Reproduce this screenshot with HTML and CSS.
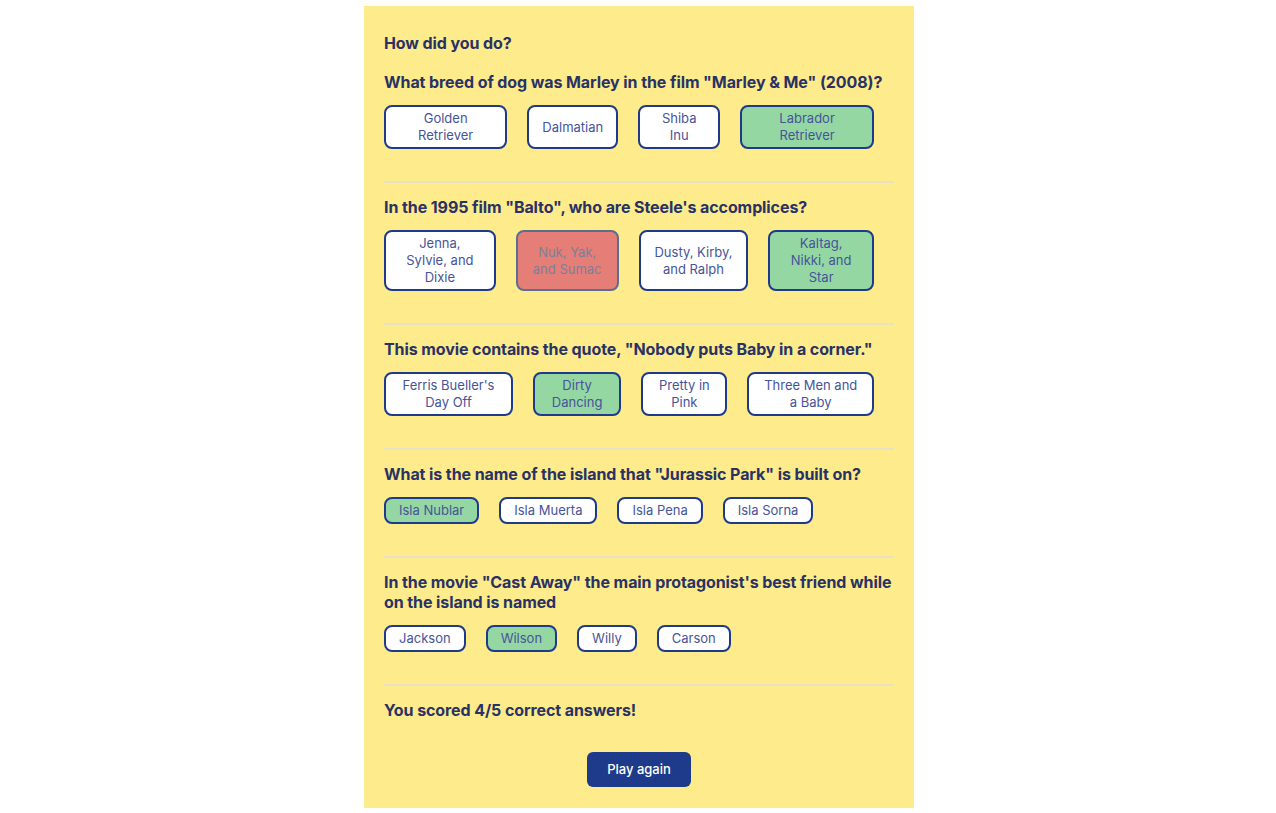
FILE: index.html
```html
<!DOCTYPE html>
<html lang="en">
<head>
<meta charset="utf-8">
<title>Quiz results</title>
<link rel="stylesheet" href="styles.css">
</head>
<body>
<main class="quiz">
  <h1 class="title">How did you do?</h1>

  <section class="question">
    <h2 class="question-text">What breed of dog was Marley in the film "Marley &amp; Me" (2008)?</h2>
    <div class="answers">
      <button class="answer">Golden Retriever</button>
      <button class="answer">Dalmatian</button>
      <button class="answer">Shiba Inu</button>
      <button class="answer correct">Labrador Retriever</button>
    </div>
  </section>

  <section class="question">
    <h2 class="question-text">In the 1995 film "Balto", who are Steele's accomplices?</h2>
    <div class="answers">
      <button class="answer">Jenna, Sylvie, and Dixie</button>
      <button class="answer wrong">Nuk, Yak, and Sumac</button>
      <button class="answer">Dusty, Kirby, and Ralph</button>
      <button class="answer correct">Kaltag, Nikki, and Star</button>
    </div>
  </section>

  <section class="question">
    <h2 class="question-text">This movie contains the quote, "Nobody puts Baby in a corner."</h2>
    <div class="answers">
      <button class="answer">Ferris Bueller's Day Off</button>
      <button class="answer correct">Dirty Dancing</button>
      <button class="answer">Pretty in Pink</button>
      <button class="answer">Three Men and a Baby</button>
    </div>
  </section>

  <section class="question">
    <h2 class="question-text">What is the name of the island that "Jurassic Park" is built on?</h2>
    <div class="answers">
      <button class="answer correct">Isla Nublar</button>
      <button class="answer">Isla Muerta</button>
      <button class="answer">Isla Pena</button>
      <button class="answer">Isla Sorna</button>
    </div>
  </section>

  <section class="question">
    <h2 class="question-text">In the movie "Cast Away" the main protagonist's best friend while on the island is named</h2>
    <div class="answers">
      <button class="answer">Jackson</button>
      <button class="answer correct">Wilson</button>
      <button class="answer">Willy</button>
      <button class="answer">Carson</button>
    </div>
  </section>

  <p class="score">You scored 4/5 correct answers!</p>
  <div class="actions">
    <button class="play-again">Play again</button>
  </div>
</main>
</body>
</html>
```

FILE: styles.css
```css
* {
  box-sizing: border-box;
}

body {
  margin: 0;
  padding-left: 2px;
  background: #ffffff;
  font-family: Inter, "Noto Sans", sans-serif;
  color: #293264;
}

.quiz {
  width: 550px;
  margin: 6px auto 0;
  padding: 27px 20px 21px;
  background: #feeb8b;
}

.title,
.question-text,
.score {
  margin: 0;
  font-size: 16px;
  font-weight: 700;
  line-height: normal;
  letter-spacing: -0.09px;
  color: #293264;
}

.title {
  margin-bottom: 19px;
}

.question {
  padding-bottom: 32px;
  border-bottom: 2px solid #e6e2c6;
  margin-bottom: 14px;
}

.question-text {
  margin-bottom: 13px;
}

.answers {
  display: flex;
  align-items: stretch;
}

.answer {
  margin: 0 20px 0 0;
  padding: 3px 13px;
  border: 2px solid #1e3a8a;
  border-radius: 8px;
  background: #ffffff;
  font-family: Inter, "Noto Sans", sans-serif;
  font-size: 13px;
  line-height: 17px;
  color: #46549a;
  text-align: center;
}

.answer.correct {
  background: #94d7a2;
}

.answer.wrong {
  background: #e47e76;
  border-color: #5e6d8e;
  color: #7e7f99;
}

.actions {
  display: flex;
  justify-content: center;
  margin-top: 32px;
}

.play-again {
  padding: 9px 20px;
  border: none;
  border-radius: 6px;
  background: #1e3a8a;
  color: #ffffff;
  font-family: Inter, "Noto Sans", sans-serif;
  font-size: 13px;
  font-weight: 500;
  line-height: 17px;
}
```
